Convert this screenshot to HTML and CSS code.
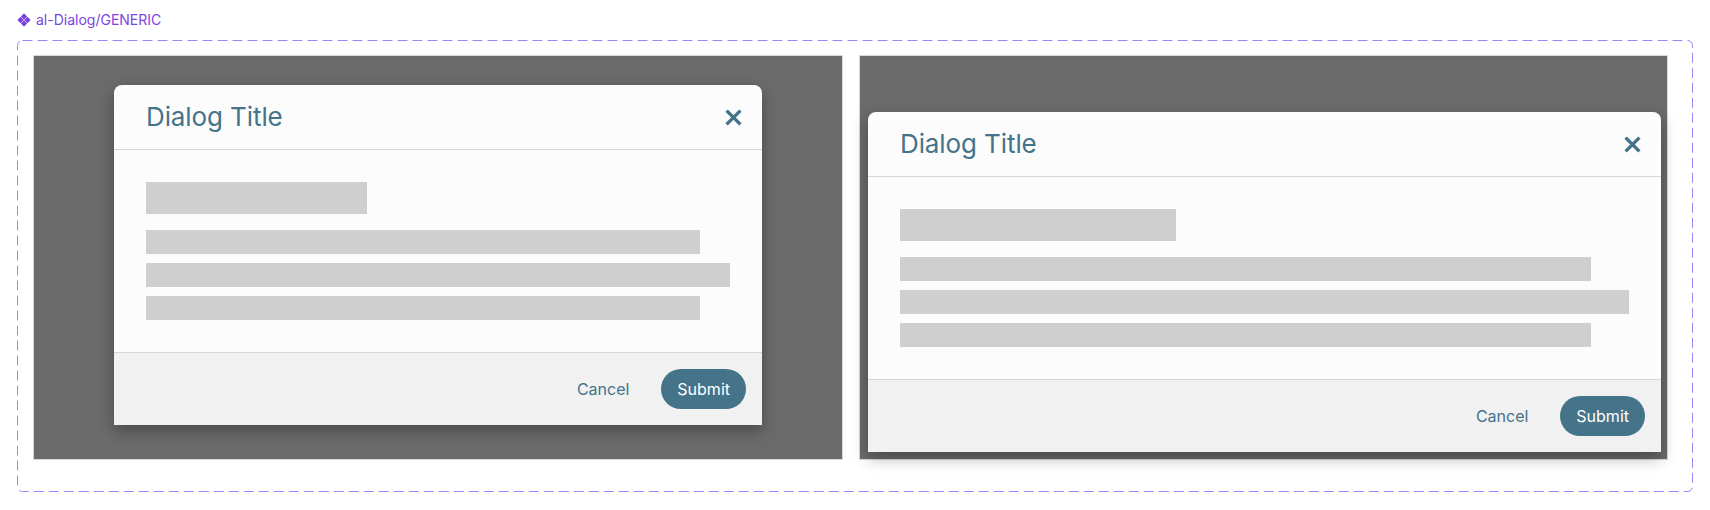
FILE: index.html
```html
<!DOCTYPE html>
<html lang="en">
<head>
<meta charset="utf-8">
<title>al-Dialog/GENERIC</title>
<link rel="stylesheet" href="styles.css">
</head>
<body>
<div class="page">
  <div class="label">
    <svg class="label-icon" width="14" height="14" viewBox="0 0 12 12" aria-hidden="true">
      <path d="M6 0.3L8.7 3L6 5.7L3.3 3Z M3 3.3L5.7 6L3 8.7L0.3 6Z M9 3.3L11.7 6L9 8.7L6.3 6Z M6 6.3L8.7 9L6 11.7L3.3 9Z" fill="currentColor"/>
    </svg>
    <span>al-Dialog/GENERIC</span>
  </div>
  <div class="variants">
    <svg class="dash" aria-hidden="true"><rect x="0.5" y="0.5" rx="5" ry="5"/></svg>
    <div class="frame frame-center">
      <div class="dialog">
        <div class="dialog-header">
          <h2 class="dialog-title">Dialog Title</h2>
          <button class="close" aria-label="Close">
            <svg width="17" height="17" viewBox="0 0 17 17"><path d="M1.6 1.6L15.4 15.4M15.4 1.6L1.6 15.4" stroke="currentColor" stroke-width="3.4" fill="none"/></svg>
          </button>
        </div>
        <div class="dialog-body">
          <div class="bar bar-heading"></div>
          <div class="lines">
            <div class="bar bar-line bar-short"></div>
            <div class="bar bar-line"></div>
            <div class="bar bar-line bar-short"></div>
          </div>
        </div>
        <div class="dialog-footer">
          <button class="btn btn-text">Cancel</button>
          <button class="btn btn-primary">Submit</button>
        </div>
      </div>
    </div>
    <div class="frame frame-full">
      <div class="dialog dialog-wide">
        <div class="dialog-header">
          <h2 class="dialog-title">Dialog Title</h2>
          <button class="close" aria-label="Close">
            <svg width="17" height="17" viewBox="0 0 17 17"><path d="M1.6 1.6L15.4 15.4M15.4 1.6L1.6 15.4" stroke="currentColor" stroke-width="3.4" fill="none"/></svg>
          </button>
        </div>
        <div class="dialog-body">
          <div class="bar bar-heading"></div>
          <div class="lines">
            <div class="bar bar-line bar-short"></div>
            <div class="bar bar-line"></div>
            <div class="bar bar-line bar-short"></div>
          </div>
        </div>
        <div class="dialog-footer">
          <button class="btn btn-text">Cancel</button>
          <button class="btn btn-primary">Submit</button>
        </div>
      </div>
    </div>
  </div>
</div>
</body>
</html>
```

FILE: styles.css
```css
* { box-sizing: border-box; }

html, body {
  margin: 0;
  padding: 0;
  background: #ffffff;
}

body {
  font-family: "Inter", "Noto Sans", sans-serif;
}

.page {
  padding: 10px 17px 18px 17px;
}

.label {
  display: flex;
  align-items: center;
  gap: 5px;
  height: 20px;
  margin-bottom: 10px;
  color: #7a45e2;
  font-size: 14px;
  line-height: 20px;
}

.label-icon {
  display: block;
  flex: none;
}

.variants {
  position: relative;
  display: flex;
  gap: 16px;
  height: 452px;
  padding: 15px 25px 32px 16px;
}

.dash {
  position: absolute;
  inset: 0;
  width: 100%;
  height: 100%;
  overflow: visible;
  pointer-events: none;
}

.dash rect {
  width: calc(100% - 1px);
  height: calc(100% - 1px);
  fill: none;
  stroke: #9a86fb;
  stroke-width: 1;
  stroke-dasharray: 10 5;
}

.frame {
  flex: none;
  height: 405px;
  background: #6b6b6b;
  border: 1px solid #d8d8d8;
  display: flex;
}

.frame-center {
  width: 810px;
  justify-content: center;
  align-items: flex-start;
  padding-top: 29px;
}

.frame-full {
  width: 809px;
  padding: 56px 6px 7px 8px;
}

.dialog {
  width: 648px;
  height: 340px;
  background: #fcfcfc;
  border-radius: 8px 8px 0 0;
  box-shadow: 0 6px 16px rgba(0, 0, 0, 0.32);
  display: flex;
  flex-direction: column;
  overflow: hidden;
}

.dialog-wide {
  flex: 1;
  width: auto;
}

.dialog-header {
  flex: none;
  height: 65px;
  display: flex;
  align-items: center;
  justify-content: space-between;
  padding: 0 20px 0 32px;
  border-bottom: 1px solid #d6d6d6;
}

.dialog-title {
  margin: 0;
  font-size: 26px;
  font-weight: 400;
  color: #44738a;
  line-height: 32px;
  letter-spacing: -0.1px;
}

.close {
  border: 0;
  background: none;
  padding: 0;
  color: #44738a;
  display: flex;
  cursor: pointer;
}

.dialog-body {
  flex: 1;
  padding: 32px;
  display: flex;
  flex-direction: column;
  gap: 16px;
}

.lines {
  display: flex;
  flex-direction: column;
  gap: 9px;
}

.bar {
  background: #cfcfcf;
}

.bar-heading {
  width: 37.9%;
  height: 32px;
}

.bar-line {
  height: 24px;
  width: 100%;
}

.bar-short {
  width: 94.8%;
}

.dialog-footer {
  flex: none;
  height: 73px;
  background: #f1f1f1;
  border-top: 1px solid #d6d6d6;
  display: flex;
  align-items: center;
  justify-content: flex-end;
  gap: 16px;
  padding: 0 16px;
}

.btn {
  font-family: "Inter", "Noto Sans", sans-serif;
  font-size: 16px;
  height: 40px;
  padding: 0 16px;
  border: 0;
  border-radius: 20px;
  cursor: pointer;
}

.btn-text {
  background: none;
  color: #44738a;
}

.btn-primary {
  background: #44738a;
  color: #ffffff;
}
```
